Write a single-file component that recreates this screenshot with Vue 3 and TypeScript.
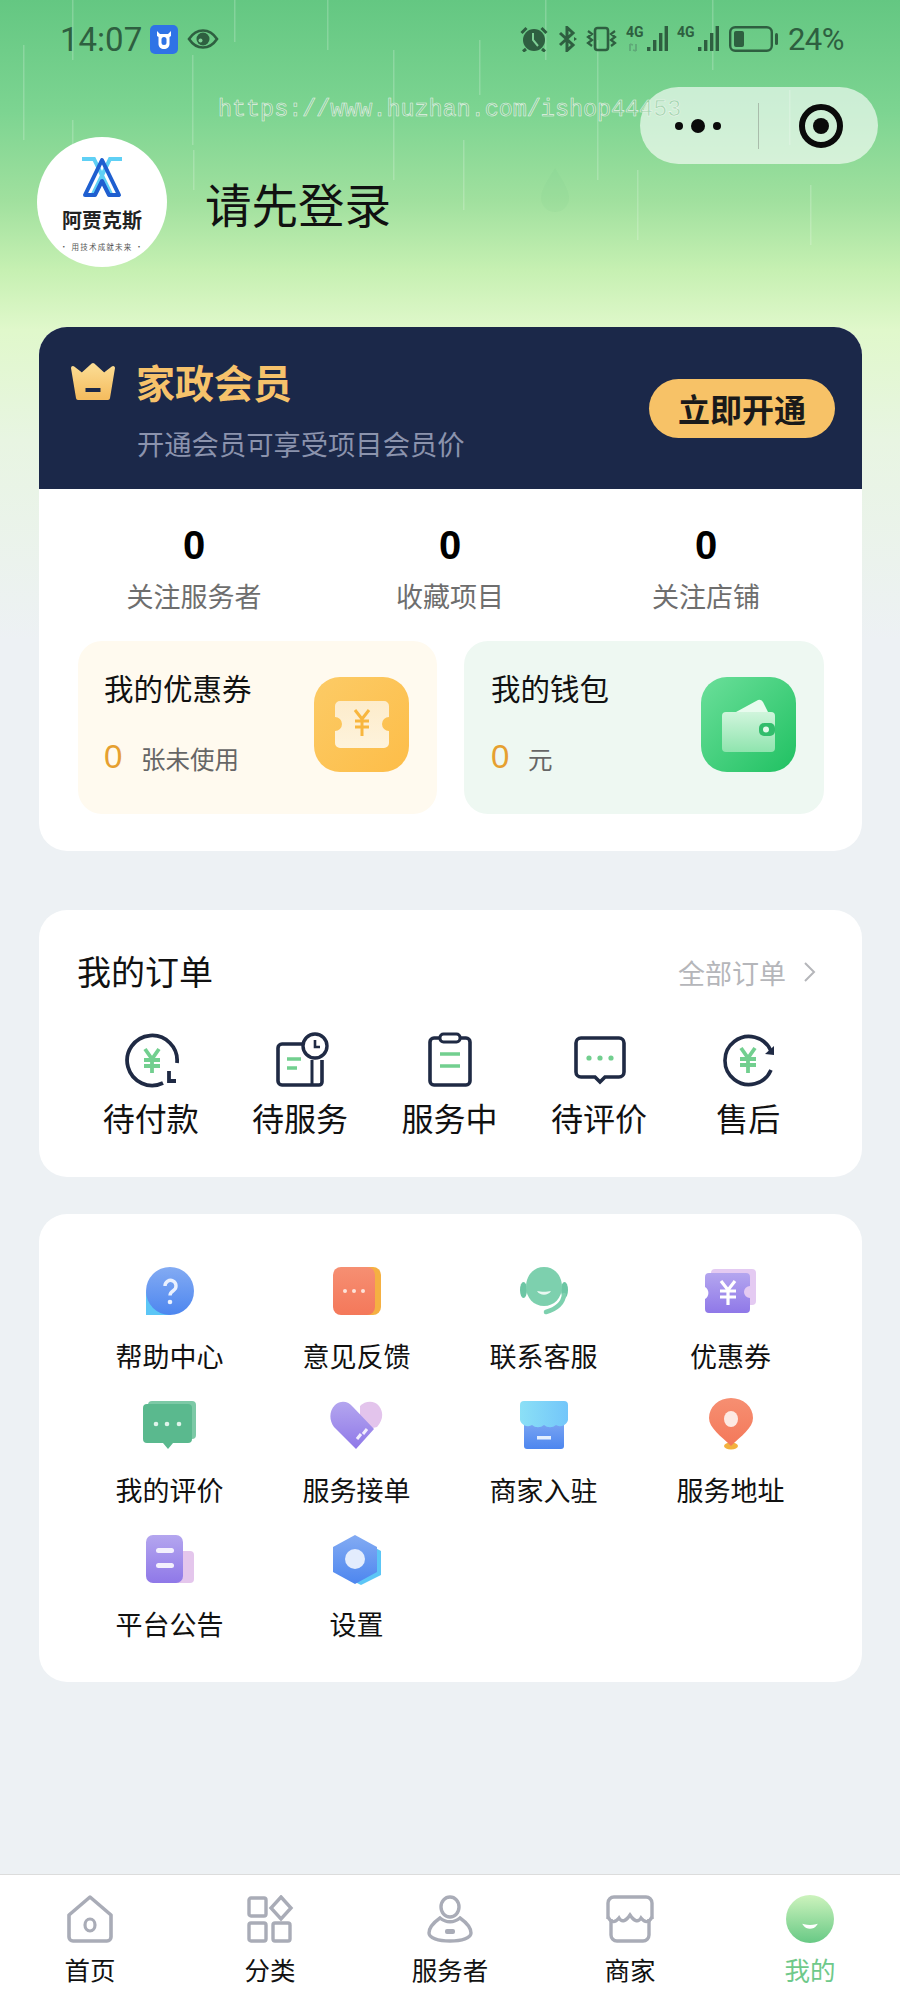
<script setup lang="ts">
const rain = [
  { x: 23, y: 45, h: 95 }, { x: 72, y: 0, h: 60 }, { x: 72, y: 120, h: 40 }, { x: 192, y: 55, h: 90 },
  { x: 193, y: 150, h: 40 }, { x: 234, y: 0, h: 42 }, { x: 327, y: 0, h: 50 }, { x: 393, y: 50, h: 130 },
  { x: 463, y: 140, h: 70 }, { x: 479, y: 40, h: 55 }, { x: 597, y: 40, h: 140 }, { x: 637, y: 170, h: 70 },
  { x: 712, y: 0, h: 70 }, { x: 789, y: 90, h: 55 }, { x: 545, y: 0, h: 60 }, { x: 810, y: 185, h: 60 }
]

const stats = [
  { num: 0, label: '关注服务者' },
  { num: 0, label: '收藏项目' },
  { num: 0, label: '关注店铺' }
]
</script>

<template>
  <div class="page">
    <svg class="defs" width="0" height="0">
      <defs>
        <linearGradient id="gGold" x1="0" y1="0" x2="0" y2="1"><stop offset="0" stop-color="#fbdc93" /><stop offset="1" stop-color="#f5bd60" /></linearGradient>
        <linearGradient id="gBlue" x1="0" y1="0" x2="0" y2="1"><stop offset="0" stop-color="#83abf3" /><stop offset="1" stop-color="#4d86ef" /></linearGradient>
        <linearGradient id="gOrange" x1="0" y1="0" x2="0" y2="1"><stop offset="0" stop-color="#f68f72" /><stop offset="1" stop-color="#f4785a" /></linearGradient>
        <linearGradient id="gPurple" x1="0" y1="0" x2="0" y2="1"><stop offset="0" stop-color="#b4a6ef" /><stop offset="1" stop-color="#8f78e8" /></linearGradient>
        <linearGradient id="gSky" x1="0" y1="0" x2="1" y2="0"><stop offset="0" stop-color="#8be0f6" /><stop offset="1" stop-color="#73c6fa" /></linearGradient>
        <linearGradient id="gWallet" x1="0" y1="0" x2="0" y2="1"><stop offset="0" stop-color="#d0f5dc" /><stop offset="1" stop-color="#8fe4ae" /></linearGradient>
        <linearGradient id="gTicket" x1="0" y1="0" x2="0" y2="1"><stop offset="0" stop-color="#fdeccb" /><stop offset="1" stop-color="#fef3dc" /></linearGradient>
        <linearGradient id="gTab" x1="0" y1="0" x2="0" y2="1"><stop offset="0" stop-color="#cdf3bd" /><stop offset="1" stop-color="#68c985" /></linearGradient>
      </defs>
    </svg>

    <div class="hero">
      <svg class="rain" width="900" height="330">
        <rect v-for="(r, i) in rain" :key="i" :x="r.x" :y="r.y" width="1.5" :height="r.h" fill="#fff" opacity="0.2" />
        <path d="M555 168c8 13 14 22 14 30a14 14 0 0 1-28 0c0-8 6-17 14-30z" fill="#5fb97a" opacity="0.07" />
      </svg>

      <div class="status">
        <div class="status-left">
          <span class="clock">14:07</span>
          <svg class="app-badge" width="28" height="29" viewBox="0 0 28 29">
            <rect width="28" height="29" rx="5" fill="#2f73e6" />
            <path d="M7 6l3 3h8l3-3v5l-1.500 1v7c0 3-2.500 5-5.500 5s-5.500-2-5.500-5v-7L7 11z" fill="#fff" />
            <rect x="11.500" y="12" width="5" height="8" rx="2.500" fill="#2f73e6" />
          </svg>
          <svg class="eye" width="32" height="22" viewBox="0 0 32 22">
            <path d="M2 11C6 5 10.500 2.500 16 2.500S26 5 30 11c-4 6-8.500 8.500-14 8.500S6 17 2 11z" fill="none" stroke="#2e5f40" stroke-width="2.600" />
            <circle cx="16" cy="11" r="6.500" fill="#2e5f40" />
            <circle cx="13.500" cy="12.500" r="2" fill="#7fcf95" />
          </svg>
        </div>
        <div class="status-right">
          <svg width="28" height="26" viewBox="0 0 28 26">
            <circle cx="14" cy="14" r="11" fill="#2e5f40" />
            <path d="M13 7v7l5 6" fill="none" stroke="#7fcf95" stroke-width="2" />
            <path d="M1.500 7l5-5M26.500 7l-5-5M6 23l-3 2.500M22 23l3 2.500" stroke="#2e5f40" stroke-width="3" fill="none" />
          </svg>
          <svg class="bt" width="20" height="26" viewBox="0 0 20 26">
            <path d="M2 7l13 12-6 5.500V1.500L15 7 2 19" fill="none" stroke="#2e5f40" stroke-width="3" />
            <path d="M16 11l3 2-3 2z" fill="#2e5f40" />
          </svg>
          <svg class="vib" width="31" height="26" viewBox="0 0 31 26">
            <rect x="9" y="2" width="13" height="22" rx="2.500" fill="none" stroke="#2e5f40" stroke-width="2.600" />
            <path d="M2 5l4 3-4 3 4 3-4 3 4 3M29 5l-4 3 4 3-4 3 4 3-4 3" fill="none" stroke="#2e5f40" stroke-width="2.200" />
          </svg>
          <div class="signal">
            <span class="tag">4G</span>
            <svg width="42" height="26" viewBox="0 0 42 26">
              <path d="M21 21h3.400v4H21zM27 14h3.400v11H27zM33 7h3.400v18H33zM38.600 0H42v25h-3.400z" fill="#2e5f40" />
              <path d="M4 18v7M10 18v7M7 19l-3-1M7 24l3 1" stroke="#5fa878" stroke-width="1.800" fill="none" />
            </svg>
          </div>
          <div class="signal">
            <span class="tag">4G</span>
            <svg width="42" height="26" viewBox="0 0 42 26">
              <path d="M21 21h3.400v4H21zM27 14h3.400v11H27zM33 7h3.400v18H33zM38.600 0H42v25h-3.400z" fill="#2e5f40" />
            </svg>
          </div>
          <svg class="battery" width="50" height="26" viewBox="0 0 50 26">
            <rect x="1.200" y="1.200" width="41.600" height="23.600" rx="5" fill="none" stroke="#2e5f40" stroke-width="2.400" />
            <rect x="5" y="5" width="10" height="16" rx="2" fill="#2e5f40" />
            <rect x="46" y="7" width="3" height="12" rx="1.500" fill="#2e5f40" />
          </svg>
          <span class="percent">24%</span>
        </div>
      </div>

      <div class="capsule">
        <div class="dots"><i class="dot" /><i class="dot big" /><i class="dot" /></div>
        <i class="divider" />
        <svg width="44" height="44" viewBox="0 0 44 44">
          <circle cx="22" cy="22" r="19" fill="none" stroke="#0a0a0a" stroke-width="6" />
          <circle cx="22" cy="22" r="8" fill="#0a0a0a" />
        </svg>
      </div>

      <div class="watermark">https://www.huzhan.com/ishop44453</div>

      <div class="profile">
        <div class="avatar">
          <svg width="42" height="42" viewBox="0 0 42 42">
            <path d="M1 3h12l17 35M41 3H29L12 38" fill="none" stroke="#5fd0f5" stroke-width="4" />
            <path d="M21 4l17 35H28L21 25l-7 14H4z" fill="none" stroke="#1f5fd0" stroke-width="4" stroke-linejoin="round" />
          </svg>
          <span class="brand">阿贾克斯</span>
          <span class="slogan">· 用技术成就未来 ·</span>
        </div>
        <span class="login">请先登录</span>
      </div>
    </div>

    <section class="card member">
      <div class="band">
        <div class="band-text">
          <div class="band-title">
            <svg width="46" height="38" viewBox="0 0 46 38">
              <path d="M3 6l9 7L23 3l11 10 9-7-5 30H8z" fill="url(#gGold)" stroke="url(#gGold)" stroke-width="4" stroke-linejoin="round" />
              <rect x="15.500" y="26" width="15" height="4" fill="#1b2849" />
            </svg>
            <span>家政会员</span>
          </div>
          <div class="band-sub">开通会员可享受项目会员价</div>
        </div>
        <div class="open-btn">立即开通</div>
      </div>

      <div class="stats">
        <div v-for="s in stats" :key="s.label" class="stat">
          <b>{{ s.num }}</b>
          <span>{{ s.label }}</span>
        </div>
      </div>

      <div class="assets">
        <div class="asset coupon">
          <div class="asset-text">
            <div class="asset-name">我的优惠券</div>
            <div class="asset-count"><em>0</em><span>张未使用</span></div>
          </div>
          <div class="asset-icon gold">
            <svg width="54" height="47" viewBox="0 0 54 47">
              <path d="M5 0h44a5 5 0 0 1 5 5v11a7 7 0 0 0 0 14v12a5 5 0 0 1-5 5H5a5 5 0 0 1-5-5V30a7 7 0 0 0 0-14V5a5 5 0 0 1 5-5z" fill="url(#gTicket)" />
              <path d="M20 9l7 9 7-9M20 20h14M20 26h14M27 18v17" fill="none" stroke="#f8b63e" stroke-width="3" />
            </svg>
          </div>
        </div>
        <div class="asset wallet">
          <div class="asset-text">
            <div class="asset-name">我的钱包</div>
            <div class="asset-count"><em>0</em><span>元</span></div>
          </div>
          <div class="asset-icon green">
            <svg width="54" height="54" viewBox="0 0 54 54">
              <path d="M14 14L36 2q3-1 5 2l5 10z" fill="#e8fbee" />
              <rect y="14" width="53" height="40" rx="4" fill="url(#gWallet)" />
              <rect x="37" y="25" width="16" height="13" rx="5" fill="#32bd6c" />
              <circle cx="44" cy="31.500" r="3" fill="#e3f9ea" />
            </svg>
          </div>
        </div>
      </div>
    </section>

    <section class="card orders">
      <div class="orders-head">
        <span class="orders-title">我的订单</span>
        <span class="orders-all">全部订单
          <svg width="13" height="22" viewBox="0 0 13 22"><path d="M2 2l9 9-9 9" fill="none" stroke="#b5b6ba" stroke-width="2" /></svg>
        </span>
      </div>
      <div class="orders-row">
        <div class="order">
          <svg width="56" height="56" viewBox="0 0 56 56">
            <path d="M53 31A25 25 0 1 0 39 51" fill="none" stroke="#1f2a44" stroke-width="3.800" />
            <path d="M45 39v10h7" fill="none" stroke="#1f2a44" stroke-width="3.800" />
            <path d="M21 17l7 10 7-10M20 28h16M20 34h16M28 27v14" fill="none" stroke="#72cf8f" stroke-width="3.800" />
          </svg>
          <span>待付款</span>
        </div>
        <div class="order">
          <svg width="56" height="56" viewBox="0 0 56 56">
            <path d="M31 12H9a4 4 0 0 0-4 4v33a4 4 0 0 0 4 4h37a3 3 0 0 0 3-3V28" fill="none" stroke="#1f2a44" stroke-width="3.600" />
            <path d="M39 28v25" stroke="#1f2a44" stroke-width="3" />
            <circle cx="42" cy="14" r="12" fill="#fff" stroke="#1f2a44" stroke-width="3.400" />
            <path d="M42 8v7h5" fill="none" stroke="#1f2a44" stroke-width="2.600" />
            <path d="M14 27h14M14 36h10" stroke="#72cf8f" stroke-width="3.600" />
          </svg>
          <span>待服务</span>
        </div>
        <div class="order">
          <svg width="56" height="56" viewBox="0 0 56 56">
            <rect x="8" y="6" width="40" height="47" rx="4" fill="none" stroke="#1f2a44" stroke-width="3.600" />
            <rect x="18" y="2" width="20" height="8" rx="3.500" fill="#fff" stroke="#1f2a44" stroke-width="3" />
            <path d="M18 22h20M18 34h20" stroke="#72cf8f" stroke-width="3.600" />
          </svg>
          <span>服务中</span>
        </div>
        <div class="order">
          <svg width="56" height="56" viewBox="0 0 56 56">
            <path d="M9 6h38a5 5 0 0 1 5 5v29a5 5 0 0 1-5 5H33l-5 5-5-5H9a5 5 0 0 1-5-5V11a5 5 0 0 1 5-5z" fill="none" stroke="#1f2a44" stroke-width="3.600" />
            <circle cx="17" cy="26" r="2.600" fill="#72cf8f" /><circle cx="28" cy="26" r="2.600" fill="#72cf8f" /><circle cx="39" cy="26" r="2.600" fill="#72cf8f" />
          </svg>
          <span>待评价</span>
        </div>
        <div class="order">
          <svg width="56" height="56" viewBox="0 0 56 56">
            <path d="M50 19A24 24 0 1 0 50 38" fill="none" stroke="#1f2a44" stroke-width="3.600" />
            <path d="M44 22l9 1 0-9z" fill="#1f2a44" />
            <path d="M20 16l7 10 7-10M19 27h16M19 33h16M27 26v15" fill="none" stroke="#72cf8f" stroke-width="3.800" />
          </svg>
          <span>售后</span>
        </div>
      </div>
    </section>

    <section class="card menu">
      <div class="menu-item">
        <svg width="48" height="48" viewBox="0 0 48 48">
          <path d="M0 24v24h24z" fill="#5cc6f6" />
          <circle cx="24" cy="24" r="24" fill="url(#gBlue)" />
          <path d="M19 19a5.500 5.500 0 1 1 8.500 4.500c-2 1.300-3.500 2.500-3.500 5" fill="none" stroke="#eaf1fe" stroke-width="3.400" />
          <circle cx="24" cy="35" r="2.300" fill="#eaf1fe" />
        </svg>
        <span>帮助中心</span>
      </div>
      <div class="menu-item">
        <svg width="48" height="48" viewBox="0 0 48 48">
          <rect x="16" width="32" height="48" rx="8" fill="#f5b042" />
          <rect width="42" height="48" rx="8" fill="url(#gOrange)" />
          <circle cx="12" cy="24" r="2" fill="#fde3da" /><circle cx="21" cy="24" r="2" fill="#fde3da" /><circle cx="30" cy="24" r="2" fill="#fde3da" />
        </svg>
        <span>意见反馈</span>
      </div>
      <div class="menu-item">
        <svg width="48" height="48" viewBox="0 0 48 48">
          <ellipse cx="3.500" cy="23" rx="3.500" ry="8" fill="#6cc6a4" />
          <ellipse cx="44.500" cy="23" rx="3.500" ry="8" fill="#6cc6a4" />
          <path d="M24 0c11 0 18 9 18 20 0 11-8 19-18 19S6 31 6 20C6 9 13 0 24 0z" fill="#7dd0ae" />
          <path d="M44 28c-1 9-8 14-18 17" fill="none" stroke="#7dd0ae" stroke-width="4.500" stroke-linecap="round" />
          <path d="M17 24c3 5 11 5 14 0-4 1-10 1-14 0z" fill="#eaf8f2" />
        </svg>
        <span>联系客服</span>
      </div>
      <div class="menu-item">
        <svg width="51" height="48" viewBox="0 0 51 48">
          <rect x="6" y="2" width="45" height="36" rx="4" fill="#e4caf2" />
          <path d="M4 6h37a4 4 0 0 1 4 4v9a6 6 0 0 0 0 12v11a4 4 0 0 1-4 4H4a4 4 0 0 1-4-4V32a7 7 0 0 0 0-12V10a4 4 0 0 1 4-4z" fill="url(#gPurple)" />
          <path d="M16 14l7 9 7-9M15 24h16M15 30h16M23 23v15" fill="none" stroke="#fff" stroke-width="3.200" />
        </svg>
        <span>优惠券</span>
      </div>
      <div class="menu-item">
        <svg width="53" height="48" viewBox="0 0 53 48">
          <rect x="5" y="0" width="48" height="38" rx="4" fill="#7cc9a6" />
          <path d="M4 3h41a4 4 0 0 1 4 4v31a4 4 0 0 1-4 4H30l-5 6-5-6H4a4 4 0 0 1-4-4V7a4 4 0 0 1 4-4z" fill="#5ab98e" />
          <circle cx="13" cy="23" r="2.300" fill="#dff4ea" /><circle cx="24" cy="23" r="2.300" fill="#dff4ea" /><circle cx="36" cy="23" r="2.300" fill="#dff4ea" />
        </svg>
        <span>我的评价</span>
      </div>
      <div class="menu-item">
        <svg width="53" height="48" viewBox="0 0 53 48">
          <path d="M30 5c5-5 14-6 19 0 5 7 4 14-2 21L30 30z" fill="#e3c4ec" />
          <path d="M5 4c6-5 13-4 18 2l21 22-18 20L4 26c-5-7-5-16 1-22z" fill="url(#gPurple)" />
          <path d="M27 38l4-5M33 33l4-5" stroke="#f2eefd" stroke-width="3" />
        </svg>
        <span>服务接单</span>
      </div>
      <div class="menu-item">
        <svg width="48" height="48" viewBox="0 0 48 48">
          <rect x="4" y="16" width="40" height="32" rx="3" fill="url(#gBlue)" />
          <path d="M4 0h40a4 4 0 0 1 4 4v15a8 8 0 0 1-12 5 9 9 0 0 1-12 0 9 9 0 0 1-12 0 8 8 0 0 1-12-5V4a4 4 0 0 1 4-4z" fill="url(#gSky)" />
          <rect x="17" y="35" width="14" height="3.500" fill="#e3eefe" />
        </svg>
        <span>商家入驻</span>
      </div>
      <div class="menu-item">
        <svg class="pin" width="44" height="52" viewBox="0 0 44 52">
          <ellipse cx="22" cy="48" rx="7" ry="3.500" fill="#f3b23f" />
          <path d="M22 48C12 38 0 30 0 20a22 20 0 0 1 44 0c0 10-12 18-22 28z" fill="url(#gOrange)" />
          <ellipse cx="22" cy="21" rx="7" ry="8" fill="#fde9e2" />
        </svg>
        <span>服务地址</span>
      </div>
      <div class="menu-item">
        <svg width="48" height="48" viewBox="0 0 48 48">
          <rect x="26" y="16" width="22" height="32" rx="4" fill="#e4c6ec" />
          <rect width="37" height="48" rx="7" fill="url(#gPurple)" />
          <rect x="10" y="13" width="18" height="5" rx="2.500" fill="#f3f0fd" />
          <rect x="10" y="28" width="18" height="5" rx="2.500" fill="#f3f0fd" />
        </svg>
        <span>平台公告</span>
      </div>
      <div class="menu-item">
        <svg class="hex" width="48" height="50" viewBox="0 0 48 50">
          <path d="M26 4l22 12v24L28 50 8 40z" fill="#5cc6f6" />
          <path d="M22 0l22 12v25L22 49 0 37V12z" fill="url(#gBlue)" />
          <circle cx="22" cy="24" r="10" fill="#e3ecfd" />
        </svg>
        <span>设置</span>
      </div>
    </section>

    <nav class="tabbar">
      <div class="tab">
        <svg width="48" height="48" viewBox="0 0 48 48">
          <path d="M24 2L45 20v22a4 4 0 0 1-4 4H7a4 4 0 0 1-4-4V20z" fill="none" stroke="#a9acb7" stroke-width="3.600" stroke-linejoin="round" />
          <ellipse cx="24" cy="30" rx="5" ry="6" fill="none" stroke="#a9acb7" stroke-width="3.200" />
        </svg>
        <span>首页</span>
      </div>
      <div class="tab">
        <svg width="48" height="48" viewBox="0 0 48 48">
          <rect x="3" y="3" width="17" height="18" rx="2" fill="none" stroke="#a9acb7" stroke-width="3.400" />
          <path d="M35 2l10 11-10 11-10-11z" fill="none" stroke="#a9acb7" stroke-width="3.400" />
          <rect x="3" y="28" width="17" height="18" rx="2" fill="none" stroke="#a9acb7" stroke-width="3.400" />
          <rect x="27" y="28" width="17" height="18" rx="2" fill="none" stroke="#a9acb7" stroke-width="3.400" />
        </svg>
        <span>分类</span>
      </div>
      <div class="tab">
        <svg width="48" height="48" viewBox="0 0 48 48">
          <ellipse cx="24" cy="12" rx="9" ry="10" fill="none" stroke="#a9acb7" stroke-width="3.400" />
          <path d="M14 23C7 28 3 33 3 38c0 5 9 8 21 8s21-3 21-8c0-5-4-10-11-15-6 5-14 5-20 0z" fill="none" stroke="#a9acb7" stroke-width="3.400" />
          <rect x="19" y="34" width="10" height="5" rx="2" fill="#a9acb7" />
        </svg>
        <span>服务者</span>
      </div>
      <div class="tab">
        <svg width="50" height="48" viewBox="0 0 50 48">
          <path d="M3 24V8a6 6 0 0 1 6-6h32a6 6 0 0 1 6 6v16M6 24v16a6 6 0 0 0 6 6h26a6 6 0 0 0 6-6V24" fill="none" stroke="#a9acb7" stroke-width="3.400" />
          <path d="M3 22c3 6 7 6 11 1 3 5 7 3 11-3 4 6 8 8 11 3 4 5 8 5 11-1" fill="none" stroke="#a9acb7" stroke-width="3.400" />
        </svg>
        <span>商家</span>
      </div>
      <div class="tab active">
        <svg width="48" height="48" viewBox="0 0 48 48">
          <circle cx="24" cy="24" r="24" fill="url(#gTab)" />
          <path d="M18 30c3 4 9 4 12 0-4 1-8 1-12 0z" fill="#fff" stroke="#fff" stroke-width="1.500" />
        </svg>
        <span>我的</span>
      </div>
    </nav>
  </div>
</template>

<style scoped>
.page {
  position: relative;
  width: 900px;
  height: 2000px;
  display: flex;
  flex-direction: column;
  overflow: hidden;
  font-family: "Noto Sans CJK SC", "Liberation Sans", sans-serif;
  color: #111;
  background: linear-gradient(180deg, #64c782 0, #7cd491 110px, #a0e09e 200px, #c6f0b2 270px, #e0f8cb 330px, #e8f5e2 440px, #edf1f4 640px);
}
.defs { position: absolute; }

.hero { position: relative; height: 327px; flex: none; }
.rain { position: absolute; left: 0; top: 0; }

.status {
  position: relative;
  display: flex;
  justify-content: space-between;
  align-items: center;
  height: 30px;
  padding: 24px 56px 0 60px;
  color: #2e5f40;
  font-family: Roboto, sans-serif;
}
.status-left { display: flex; align-items: center; }
.clock { font-size: 33px; width: 90px; }
.eye { margin-left: 9px; }
.status-right { display: flex; align-items: center; gap: 9px; }
.bt { margin-left: 1px; }
.vib { margin-left: -1px; }
.signal { position: relative; width: 42px; height: 26px; }
.tag {
  position: absolute;
  left: 0;
  top: -1px;
  font-size: 14px;
  font-weight: 700;
  line-height: 14px;
}
.battery { margin-left: 1px; }
.percent { font-size: 31px; letter-spacing: -0.5px; }

.watermark {
  position: absolute;
  left: 218px;
  top: 95px;
  font-family: "Liberation Mono", monospace;
  font-size: 23.4px;
  line-height: 30px;
  color: rgba(130, 195, 145, 0.55);
  -webkit-text-stroke: 0.6px rgba(240, 246, 240, 0.92);
  white-space: nowrap;
}

.capsule {
  position: absolute;
  left: 640px;
  top: 87px;
  width: 238px;
  height: 77px;
  box-sizing: border-box;
  display: flex;
  align-items: center;
  padding-left: 35px;
  border-radius: 39px;
  background: rgba(255, 255, 255, 0.62);
}
.dots { display: flex; align-items: center; gap: 8px; width: 53px; }
.dot { width: 8px; height: 8px; border-radius: 50%; background: #0a0a0a; }
.dot.big { width: 14px; height: 14px; }
.divider { width: 1px; height: 46px; margin: 0 40px 0 30px; background: #a9bcab; }

.profile {
  position: relative;
  display: flex;
  align-items: center;
  gap: 38px;
  margin-top: 83px;
  padding-left: 37px;
}
.avatar {
  width: 130px;
  height: 130px;
  border-radius: 50%;
  background: #fff;
  display: flex;
  flex-direction: column;
  align-items: center;
  padding-top: 19px;
  box-sizing: border-box;
}
.brand { font-size: 20px; font-weight: 700; line-height: 26px; margin-top: 9px; color: #222; }
.slogan { font-size: 7.5px; line-height: 12px; margin-top: 8px; letter-spacing: 1.2px; color: #555; white-space: nowrap; }
.login { font-size: 46.5px; line-height: 60px; color: #111; margin-top: 2px; }

.card {
  flex: none;
  width: 823px;
  margin-left: 39px;
  background: #fff;
  border-radius: 28px;
  overflow: hidden;
}

.band {
  display: flex;
  justify-content: space-between;
  height: 162px;
  padding: 29px 27px 0 31px;
  box-sizing: border-box;
  background: #1b2849;
}
.band-title {
  display: flex;
  align-items: center;
  gap: 20px;
  height: 50px;
  font-size: 39px;
  font-weight: 700;
  color: #f6c26b;
}
.band-sub {
  margin: 17px 0 0 67px;
  font-size: 27.3px;
  line-height: 40px;
  color: #8b93ad;
}
.open-btn {
  width: 186px;
  height: 59px;
  margin-top: 23px;
  border-radius: 30px;
  background: #f7c267;
  color: #1a1a1a;
  font-size: 32px;
  font-weight: 700;
  line-height: 59px;
  text-align: center;
}

.stats {
  display: grid;
  grid-template-columns: repeat(3, 256px);
  padding: 32px 27px 0 27px;
}
.stat { display: flex; flex-direction: column; align-items: center; }
.stat b { font-family: "Liberation Sans", sans-serif; font-size: 40px; line-height: 48px; color: #000; }
.stat span { margin-top: 9px; font-size: 27px; line-height: 36px; color: #6e6e6e; }

.assets {
  display: grid;
  grid-template-columns: 359px 360px;
  gap: 27px;
  margin: 27px 0 37px 39px;
}
.asset {
  display: flex;
  justify-content: space-between;
  align-items: center;
  height: 173px;
  padding: 0 28px 0 26px;
  box-sizing: border-box;
  border-radius: 24px;
}
.coupon { background: #fffaef; }
.wallet { background: #eef8f2; padding-left: 27px; }
.asset-text { padding-bottom: 12px; }
.asset-name { font-size: 29.5px; line-height: 40px; color: #111; }
.asset-count { display: flex; align-items: center; height: 40px; margin-top: 30px; }
.asset-count em {
  width: 37px;
  font-family: "Liberation Sans", sans-serif;
  font-style: normal;
  font-size: 33px;
  color: #e6a030;
}
.asset-count span { font-size: 24.5px; margin-top: 4px; color: #666; }
.asset-icon {
  width: 95px;
  height: 95px;
  margin-top: -6px;
  display: flex;
  align-items: center;
  justify-content: center;
  border-radius: 26px;
}
.gold { background: linear-gradient(135deg, #fccb66, #fdbd48); }
.green { background: linear-gradient(135deg, #6bdf9a, #20c162); }

.orders { margin-top: 59px; padding: 38px 39px 36px 37px; box-sizing: border-box; }
.orders-head { display: flex; justify-content: space-between; align-items: center; height: 48px; padding-left: 1px; }
.orders-title { font-size: 34px; line-height: 46px; margin-top: -2px; color: #111; }
.orders-all {
  display: flex;
  align-items: center;
  gap: 17px;
  font-size: 27px;
  color: #b5b6ba;
  padding-right: 7px;
}
.orders-row { display: grid; grid-template-columns: repeat(5, 1fr); margin-top: 36px; }
.order { display: flex; flex-direction: column; align-items: center; }
.order svg { margin-left: 2px; }
.order span { margin-top: 7px; margin-bottom: 2px; font-size: 32px; line-height: 44px; color: #111; }

.menu {
  display: grid;
  grid-template-columns: repeat(4, 187px);
  row-gap: 24px;
  margin-top: 37px;
  padding: 53px 39px 37px 37px;
  box-sizing: border-box;
}
.menu-item { display: flex; flex-direction: column; align-items: center; height: 110px; }
.menu-item svg { flex: none; margin-bottom: -1px; }
.menu-item svg.pin { margin-top: -3px; margin-bottom: -2px; }
.menu-item svg.hex { margin-bottom: -3px; }
.menu-item span { margin-top: 22px; font-size: 27px; line-height: 40px; color: #111; }

.tabbar {
  display: grid;
  grid-template-columns: repeat(5, 180px);
  margin-top: auto;
  height: 126px;
  box-sizing: border-box;
  padding-top: 20px;
  background: #fff;
  border-top: 1px solid #dcdcdc;
}
.tab { display: flex; flex-direction: column; align-items: center; }
.tab span { margin-top: 9px; font-size: 25.5px; line-height: 34px; color: #111; }
.tab.active span { color: #6fc98a; }
</style>
